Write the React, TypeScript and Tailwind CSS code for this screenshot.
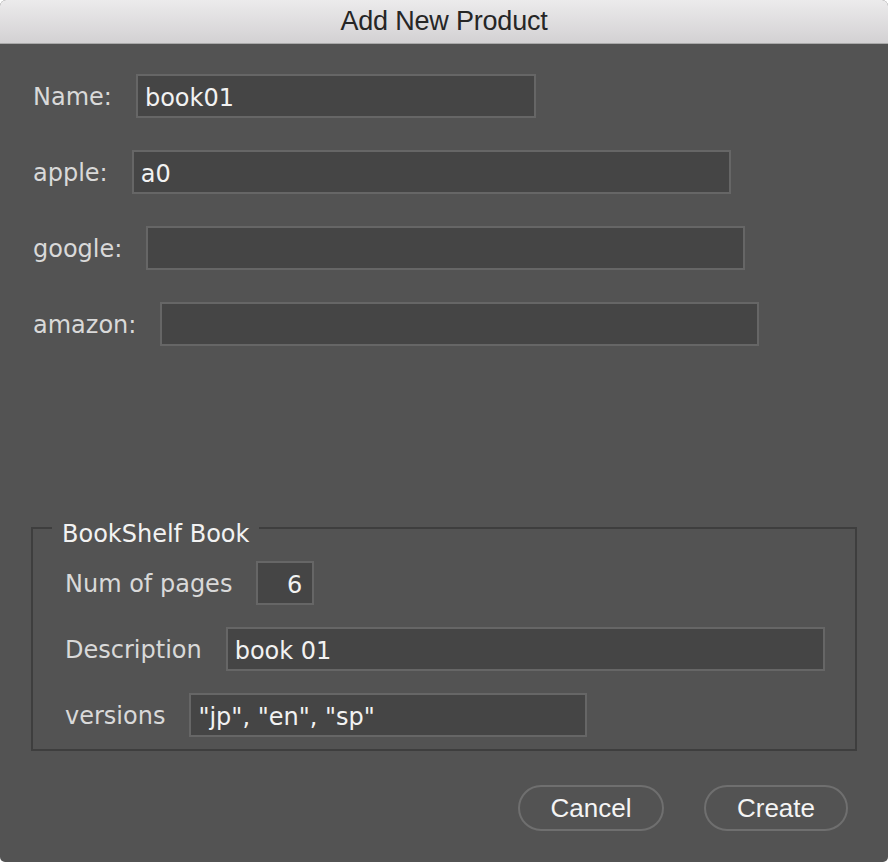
import React from 'react';

const font = { fontFamily: '"DejaVu Sans", Verdana, sans-serif' };

function Field({ value, className, alignRight }: { value?: string; className: string; alignRight?: boolean }) {
  return (
    <div
      className={`flex h-[44px] shrink-0 items-center border-2 border-[#666666] bg-[#454545] pt-[3px] text-[24px] text-[#f2f2f2] ${
        alignRight ? 'justify-end pr-[10px]' : 'pl-[7px]'
      } ${className}`}
    >
      {value}
    </div>
  );
}

function Row({ label, children, gap = 'gap-[24px]' }: { label: string; children: React.ReactNode; gap?: string }) {
  return (
    <div className={`flex items-center ${gap}`}>
      <span className="pt-[2px] text-[24px] text-[#d9d9d9]">{label}</span>
      {children}
    </div>
  );
}

export default function App() {
  return (
    <div className="h-[862px] w-[888px] bg-white" style={font}>
      <div className="flex h-full flex-col overflow-hidden rounded-t-[6px] rounded-b-[5px] bg-[#535353]">
        <div className="flex h-[44px] shrink-0 items-center justify-center border-b border-[#a9a9a9] bg-gradient-to-b from-[#ecebec] to-[#d3d1d3]">
          <span
            className="text-[27px] tracking-[-0.2px] text-[#262626]"
            style={{ fontFamily: '"Liberation Sans", Arial, sans-serif' }}
          >
            Add New Product
          </span>
        </div>

        <div className="flex flex-col gap-[32px] pl-[33px] pt-[30px]">
          <Row label="Name:">
            <Field value="book01" className="w-[400px]" />
          </Row>
          <Row label="apple:">
            <Field value="a0" className="w-[599px]" />
          </Row>
          <Row label="google:">
            <Field className="w-[599px]" />
          </Row>
          <Row label="amazon:">
            <Field className="w-[599px]" />
          </Row>
        </div>

        <div className="relative mx-[31px] mt-[181px] border-2 border-[#3e3e3e] pb-[12px] pl-[32px] pt-[32px]">
          <span className="absolute left-[19px] top-[-7px] bg-[#535353] px-[10px] text-[24px] leading-none text-[#f2f2f2]">
            BookShelf Book
          </span>
          <div className="flex flex-col gap-[22px]">
            <Row label="Num of pages">
              <Field value="6" className="w-[58px]" alignRight />
            </Row>
            <Row label="Description">
              <Field value="book 01" className="w-[599px]" />
            </Row>
            <Row label="versions">
              <Field value={'"jp", "en", "sp"'} className="w-[398px]" />
            </Row>
          </div>
        </div>

        <div
          className="mr-[40px] mt-[34px] flex justify-end gap-[40px] text-[26px] text-[#f4f4f4]"
          style={{ fontFamily: '"Liberation Sans", Arial, sans-serif' }}
        >
          <button className="flex h-[46px] w-[146px] items-center justify-center rounded-full border-2 border-[#6f6f6f]">
            Cancel
          </button>
          <button className="flex h-[46px] w-[144px] items-center justify-center rounded-full border-2 border-[#6f6f6f]">
            Create
          </button>
        </div>
      </div>
    </div>
  );
}
